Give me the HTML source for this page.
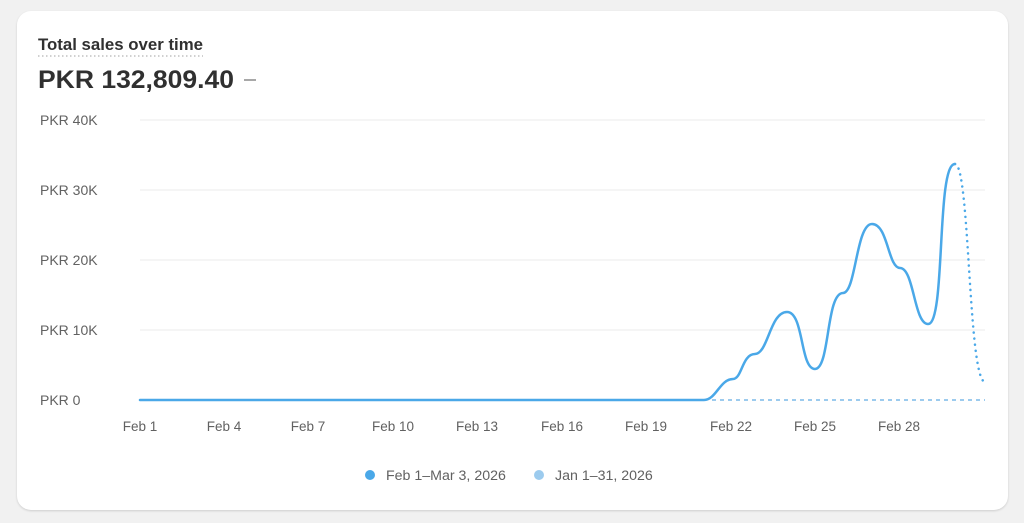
<!DOCTYPE html>
<html><head><style>
html,body{margin:0;padding:0;background:#f1f1f1;width:1024px;height:523px;overflow:hidden;font-family:"Liberation Sans",sans-serif}
.card{position:absolute;left:17px;top:11px;width:991px;height:499px;background:#fff;border-radius:14px;box-shadow:0 1px 2px rgba(0,0,0,.15)}
svg{position:absolute;left:0;top:0}
</style></head><body>
<div class="card"></div>
<svg width="1024" height="523" font-family="Liberation Sans, sans-serif">
<text x="38" y="50" font-size="16.5" font-weight="bold" fill="#303030" textLength="165" lengthAdjust="spacingAndGlyphs">Total sales over time</text>
<line x1="38" y1="56" x2="203" y2="56" stroke="#b5b5b5" stroke-width="1.3" stroke-dasharray="1.5 2.5"/>
<text x="38" y="88" font-size="25" font-weight="bold" fill="#303030" textLength="196" lengthAdjust="spacingAndGlyphs">PKR 132,809.40</text>
<line x1="244" y1="80" x2="256" y2="80" stroke="#8a8a8a" stroke-width="1.5"/>
<g stroke="#ebebeb" stroke-width="1">
<line x1="140" y1="120" x2="985" y2="120"/><line x1="140" y1="190" x2="985" y2="190"/>
<line x1="140" y1="260" x2="985" y2="260"/><line x1="140" y1="330" x2="985" y2="330"/>
</g>
<g font-size="14" fill="#616161">
<text x="40" y="125">PKR 40K</text><text x="40" y="195">PKR 30K</text>
<text x="40" y="265">PKR 20K</text><text x="40" y="335">PKR 10K</text>
<text x="40" y="405">PKR 0</text>
</g>
<g font-size="13.5" fill="#616161" text-anchor="middle">
<text x="140" y="431">Feb 1</text><text x="224" y="431">Feb 4</text><text x="308" y="431">Feb 7</text>
<text x="393" y="431">Feb 10</text><text x="477" y="431">Feb 13</text><text x="562" y="431">Feb 16</text>
<text x="646" y="431">Feb 19</text><text x="731" y="431">Feb 22</text><text x="815" y="431">Feb 25</text>
<text x="899" y="431">Feb 28</text>
</g>
<line x1="712" y1="400" x2="985" y2="400" stroke="#9ccbee" stroke-width="2" stroke-dasharray="4 4"/>
<path d="M140 400 L704 400 C716 400 720 379 733 379 C742 379 742 354 755 354 C768 354 770 312 787 312 C804 312 800 369 815 369 C830 369 826 293 843 293 C856 293 856 224 872 224 C888 224 888 268 900 268 C914 268 914 324 928 324 C946 324 936 164 955 164" fill="none" stroke="#4aa8e8" stroke-width="2.5" stroke-linecap="round"/>
<path d="M955 164 C970 164 968 380 985 382" fill="none" stroke="#4aa8e8" stroke-width="2.5" stroke-dasharray="0.1 6" stroke-linecap="round"/>
<circle cx="370" cy="475" r="5" fill="#4aa8e8"/>
<text x="386" y="480" font-size="14.2" fill="#616161">Feb 1–Mar 3, 2026</text>
<circle cx="539" cy="475" r="5" fill="#9ccbee"/>
<text x="555" y="480" font-size="14.2" fill="#616161">Jan 1–31, 2026</text>
</svg>
</body></html>
